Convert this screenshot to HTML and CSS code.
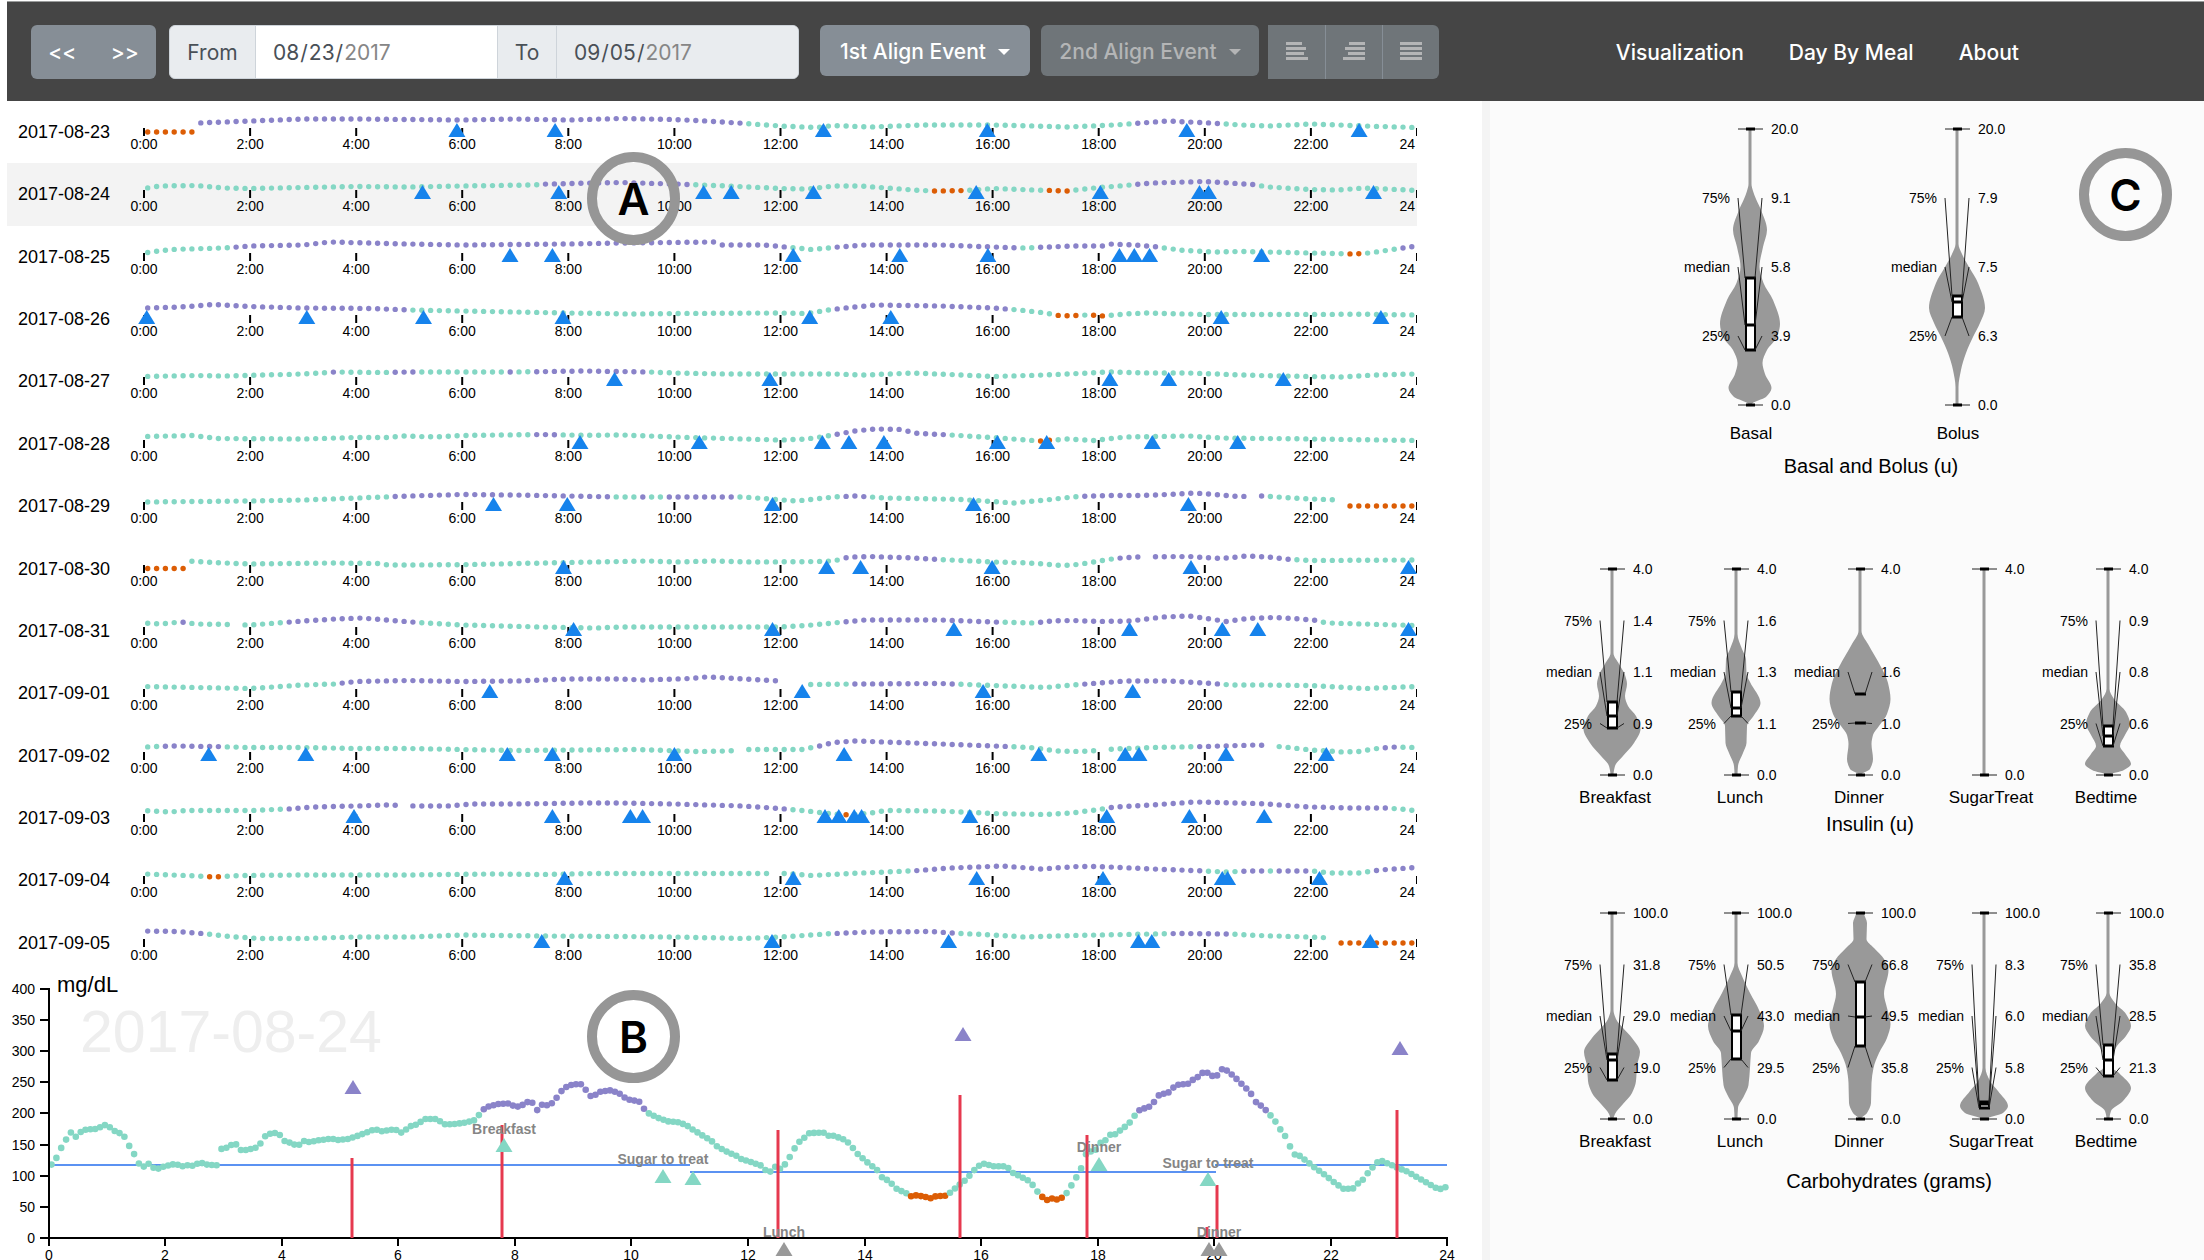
FILE: index.html
```html
<!DOCTYPE html>
<html lang="en">
<head>
<meta charset="utf-8">
<title>Glucose timeline</title>
<meta name="viewport" content="width=device-width, initial-scale=1">
<link rel="stylesheet" href="styles.css">
</head>
<body>
<header class="topbar">
  <div class="pager">
    <button type="button" class="pager-button" aria-label="Earlier">&lt;&lt;</button>
    <button type="button" class="pager-button" aria-label="Later">&gt;&gt;</button>
  </div>
  <div class="range">
    <label class="range-label range-from" for="from">From</label>
    <input class="range-input" id="from" type="date" value="2017-08-23">
    <label class="range-label range-to" for="to">To</label>
    <input class="range-input range-readonly" id="to" type="date" value="2017-09-05" readonly>
  </div>
  <button type="button" class="align-menu">1st Align Event <span class="caret"></span></button>
  <button type="button" class="align-menu align-second" disabled>2nd Align Event <span class="caret"></span></button>
  <div class="align-group">
    <button type="button" class="align-button" aria-label="Align left" disabled><svg viewBox="0 0 22 18" width="22" height="18"><path d="M0 1.5h16M0 6.5h20M0 11.500h18M0 16.500h22" stroke="currentColor" stroke-width="3"/></svg></button>
    <button type="button" class="align-button" aria-label="Align right" disabled><svg viewBox="0 0 22 18" width="22" height="18"><path d="M6 1.500h16M2 6.500h20M5 11.500h17M0 16.500h22" stroke="currentColor" stroke-width="3"/></svg></button>
    <button type="button" class="align-button" aria-label="Justify" disabled><svg viewBox="0 0 22 18" width="22" height="18"><path d="M0 1.500h22M0 6.500h22M0 11.500h22M0 16.500h22" stroke="currentColor" stroke-width="3"/></svg></button>
  </div>
  <nav class="nav">
    <a href="#visualization">Visualization</a>
    <a href="#meal">Day By Meal</a>
    <a href="#about">About</a>
  </nav>
</header>
<main class="content">
  <section class="left">
    <div class="days" id="days"></div>
    <svg class="detail" id="detail" viewBox="0 0 1475 286" role="img" aria-label="Glucose on 2017-08-24"></svg>
    <span class="badge badge-a">A</span>
    <span class="badge badge-b">B</span>
  </section>
  <section class="right">
    <svg class="violins" id="basal" viewBox="0 0 714 398"></svg>
    <svg class="violins" id="insulin" viewBox="0 0 714 360"></svg>
    <svg class="violins" id="carbs" viewBox="0 0 714 400"></svg>
    <span class="badge badge-c">C</span>
  </section>
</main>
<script src="charts.js"></script>
</body>
</html>
```
FILE: styles.css
```css
* { box-sizing: border-box; }

body {
  margin: 0;
  background: #fff;
  color: #000;
  font-family: "Liberation Sans", Arial, sans-serif;
}

.topbar {
  display: flex;
  align-items: flex-start;
  height: 100px;
  margin: 1px 0 0 7px;
  padding: 23px 0 0 24px;
  border-top: 1px solid #9a9c9c;
  background: #454545;
  font-family: Inter, "Liberation Sans", sans-serif;
  font-size: 21px;
}

button, input {
  font: inherit;
  border: 0;
  margin: 0;
}

.pager {
  display: flex;
  width: 125px;
  height: 54px;
  border-radius: 6px;
  background: #868e96;
  overflow: hidden;
}

.pager-button {
  flex: 1;
  padding: 0;
  background: none;
  color: #fff;
  font-weight: 500;
}

.range {
  display: flex;
  width: 630px;
  height: 54px;
  margin-left: 13px;
  border: 1px solid #ced4da;
  border-radius: 6px;
  background: #e9ecef;
  overflow: hidden;
  color: #495057;
}

.range-label {
  display: flex;
  align-items: center;
  justify-content: center;
  border-right: 1px solid #ced4da;
}

.range-from { width: 86px; }
.range-to { width: 60px; border-left: 1px solid #ced4da; }

.range-input {
  flex: 1;
  min-width: 0;
  padding: 0 16px;
  background: #fff;
  color: #495057;
}

.range-readonly { background: #e9ecef; }
.range-input::-webkit-datetime-edit-year-field { color: #868686; }
.range-input::-webkit-calendar-picker-indicator { display: none; }

.align-menu {
  display: flex;
  align-items: center;
  justify-content: center;
  gap: 12px;
  width: 210px;
  height: 51px;
  margin-left: 21px;
  padding: 2px 0 0;
  border-radius: 6px;
  background: #868e96;
  color: #fff;
  font-weight: 500;
}

.align-second {
  width: 218px;
  margin-left: 11px;
  background: #6f7579;
  color: #b4b5b6;
}

.caret {
  border: 6px solid transparent;
  border-top-color: currentColor;
  border-bottom: 0;
}

.align-group {
  display: flex;
  height: 54px;
  margin-left: 9px;
  border-radius: 0 6px 6px 0;
  overflow: hidden;
}

.align-button {
  width: 57px;
  padding: 0;
  background: #6f7579;
  color: #b4b5b6;
}

.align-button + .align-button { border-left: 1px solid #868e96; }

.nav {
  display: flex;
  gap: 45px;
  margin-left: auto;
  padding: 15px 185px 0 0;
  font-weight: 500;
}

.nav a { color: #fff; text-decoration: none; }

.content {
  display: grid;
  grid-template-columns: minmax(0, 1475fr) minmax(0, 722fr);
  padding-left: 7px;
}

.left { position: relative; }

.days {
  display: grid;
  grid-auto-rows: 1fr;
  min-height: 873px;
  padding-right: 65px;
}

.day {
  display: flex;
  align-items: flex-start;
}

.day-active { background: #f3f3f3; }

.day-date {
  flex: none;
  width: 120px;
  padding: 21px 0 0 11px;
  font-size: 18px;
  line-height: 21px;
}

.day-chart {
  flex: 1;
  min-width: 0;
  display: block;
}

.detail, .violins { display: block; width: 100%; }

.right {
  position: relative;
  border-left: 8px solid #f4f4f4;
  background: #fbfbfb;
}

.badge {
  position: absolute;
  display: grid;
  place-items: center;
  width: 93px;
  height: 93px;
  border: 10px solid #969696;
  border-radius: 50%;
  font-family: Inter, "Liberation Sans", sans-serif;
  font-size: 44px;
  font-weight: 600;
  line-height: 1;
}

.badge-a { left: 580px; top: 51px; }
.badge-b { left: 580px; top: 889px; }
.badge-c { right: 32px; top: 47px; }

.dot { fill: #84d7c4; }
.dot-high { fill: #8a83c9; }
.dot-low { fill: #dc5d05; }
.event { fill: #1683ec; }
.event-none { fill: #999; }
.axis { stroke: #000; stroke-width: 2; fill: none; }
.small { font-size: 14px; }
.meal { font-size: 14px; font-weight: 700; fill: #858585; text-anchor: middle; }
.middle { text-anchor: middle; }
.end { text-anchor: end; }
.unit { font-size: 22px; }
.watermark { font-size: 59px; fill: #eee; }
.basal-line { stroke: #5b92f2; stroke-width: 2; }
.bolus-line { stroke: #e6394f; stroke-width: 3; }
.name { font-size: 17px; text-anchor: middle; }
.title { font-size: 20px; text-anchor: middle; }
.shape { fill: #999; }
.leader { stroke: #222; stroke-width: 1; }
.box { fill: #fff; stroke: #000; stroke-width: 2; }
.mark { stroke: #000; stroke-width: 3; }
```
FILE: charts.js
```js
// Linear interpolation through [x, y] pairs.
function interpolate(points, x) {
  if (x <= points[0][0]) return points[0][1];
  for (let i = 1; i < points.length; i++) {
    if (x <= points[i][0]) {
      const [x0, y0] = points[i - 1];
      const [x1, y1] = points[i];
      return y0 + (y1 - y0) * (x - x0) / (x1 - x0);
    }
  }
  return points[points.length - 1][1];
}

function pairs(text) {
  return text.trim().split(/\s+/).map(p => p.split(',').map(Number));
}

const within = (ranges, x) => ranges.some(([a, b]) => x >= a && x <= b);
const triangle = (x, base, cls) =>
  `<path class="${cls}" d="M${(x - 8.5).toFixed(1)} ${base}h17l-8.5 -14z"/>`;

// curve: hour,height   high / low / gaps: hour ranges   events: hours
const days = [
  { date: '2017-08-23',
    curve: '0,-4 1,-4 1.01,5 2,7 3,9 4,9 5,8.5 6,8 7,9 8,8 9,9.5 10,8.5 10.6,7 11.2,5 12,2 12.7,.5 13,2.5 13.7,1 14.7,3 16,3 16.8,2 17.4,1 18.3,3 18.8,5 19.3,7 20.1,5 20.7,3 21.2,2 22,4 23,2 24,.5',
    high: [[1, 11.25], [18.7, 20.25]], low: [[0, 1]], gaps: [], events: [5.9, 7.75, 12.81, 15.9, 19.66, 22.91] },
  { date: '2017-08-24',
    curve: '0,1.5 .3,4 1,4.5 1.5,2 2,1.5 3,2.5 4,3.5 5,3 6,4 7.3,5 7.6,6 9,7.5 10,6 10.5,5 11,4 12,1.5 12.5,1 13,4 13.5,4 14,2 14.5,0 14.9,-1 15.5,-.5 16,1.5 16.8,0 17.4,-1 18,2.5 18.5,4.5 19,7 20,8.5 20.9,5.5 21.2,3 22,.5 22.5,0 23,2 24,-.5',
    high: [[7.5, 10.3], [18.6, 21]], low: [[14.8, 15.45], [16.95, 17.45]], gaps: [], events: [5.25, 7.82, 10.55, 11.07, 12.62, 15.69, 18.03, 19.9, 20.07, 23.18] },
  { date: '2017-08-25',
    curve: '0,0 .5,3.5 1.5,5 2,7 3,8 3.5,11 4.2,10 5,9 6,8 8,9 9,10 10.75,11 10.85,8 11.7,8 12.1,6 12.6,3.5 12.9,5 13.1,6 13.6,8 15,8 16,6 16.6,5 17.5,7 18.1,7 18.2,9 18.7,8 19.1,6 19.6,2.5 20.2,1 20.7,1.5 22,0 22.8,-1 23.1,0 23.6,4 24,7',
    high: [[1.6, 12.15], [13, 16.45], [16.8, 19.18], [23.7, 24]], low: [[22.65, 23]], gaps: [], events: [6.9, 7.7, 12.24, 14.25, 15.91, 18.39, 18.67, 18.96, 21.07] },
  { date: '2017-08-26',
    curve: '0,7 .7,8 1.3,10.5 2,8.5 3,7 4.3,6.5 5,5 6,4 7,3 8,2 9.2,1 10,1.5 12,2 12.5,1.5 12.9,5 13.3,7.5 13.8,10 15,9 16,7 16.5,5 17,2 17.3,-1 17.8,0 18.1,-1 18.5,1 18.9,2 20,.5 21,.5 23,.7 24,0',
    high: [[0, 4.98], [12.95, 16.25]], low: [[17.2, 17.7], [17.85, 18.2]], gaps: [], events: [.05, 3.07, 5.27, 7.9, 12.55, 14.08, 20.31, 23.32] },
  { date: '2017-08-27',
    curve: '0,.5 1,1.5 1.5,1 3,3 3.6,5 4.5,4.5 5,5 6,5 7,5 8.3,6 9.5,5 10,4 11,3 13,3 13.6,2 14.5,4 15.2,2.5 16,.5 17,2 18.2,5 19,4 19.7,4 21,1.5 22,.5 22.6,0 23.2,2 24,3',
    high: [[3.45, 3.65], [4.65, 5.15], [6.8, 6.95], [7.3, 9.5]], low: [], gaps: [], events: [8.87, 11.8, 18.21, 19.32, 21.48] },
  { date: '2017-08-28',
    curve: '0,3.5 .9,4.5 1.4,1.5 3,1 4,2.5 4.6,2.5 4.9,4 5.5,3 6,4.5 7.5,5.5 8.3,4.7 9,5 10,3 11,1.5 12,0 12.5,1 13,5 13.4,9 13.8,11 14.3,10.5 14.5,7 15.2,5 16,2.5 16.9,-1 17.4,1 17.9,-.5 18.5,3 19.7,4 20.3,2 22,1 24,-.5',
    high: [[7.3, 7.8], [13, 15.15]], low: [[16.85, 17.2]], gaps: [], events: [8.22, 10.47, 12.79, 13.29, 13.95, 16.09, 17.02, 19.01, 20.62] },
  { date: '2017-08-29',
    curve: '0,0 2,1 3,2 4,4 5,6 6,7.5 7,7 8,6 9,5 11.3,5 11.9,2.5 12.3,1 13,5 13.4,6 14,4 15.4,2.5 16,.5 16.4,-1 17,2 17.6,5.5 18.2,6.5 18.8,6.5 19.3,7.5 19.8,9 20.2,7.5 20.6,5.5 21.1,6 21.5,4.5 22,3 22.54,2 22.55,-4 24,-4',
    high: [[4.65, 8.9], [9.25, 9.45], [9.75, 11.2], [13.1, 13.65], [17.6, 21.2]], low: [[22.55, 24]], gaps: [[20.8, 20.97], [22.5, 22.62]], events: [6.59, 7.98, 11.85, 15.64, 19.69] },
  { date: '2017-08-30',
    curve: '0,-3.5 .82,-3.5 .83,4 1.5,2 2,1 3.5,2 4.4,1.5 4.6,0 5,0 6,.3 8,2.5 9.5,4 10,3 10.7,4 11.5,3 12.5,3.3 13,4 13.3,8 13.7,8.5 14.5,7 15,5.5 16,3 16.7,2 17.3,-.5 17.6,.5 17.9,3 18.3,6.5 18.7,8 19.7,8.5 20.3,6.5 20.8,9 21.2,8 21.6,5.5 22,4.5 24,5',
    high: [[13.1, 15.05], [18.25, 21.65]], low: [[0, .82]], gaps: [[18.75, 19]], events: [7.91, 12.87, 13.51, 15.99, 19.74, 23.84] },
  { date: '2017-08-31',
    curve: '0,4 .3,3 .7,5 1,3 1.6,2.5 2,2 2.5,4 3,6 3.6,8 4.1,9 4.8,6 5.3,4 6,2 7.5,0 8.5,-1 9,0 12,0 12.5,1.5 13,4 13.6,7 15,7 16,5 16.8,4 17.1,6 17.5,6.5 18,5.5 18.6,6 19.2,10 19.7,11 20.1,8 20.4,5.5 20.8,8.5 21.3,9.5 21.8,8 22.1,6.5 22.3,4 23,3 24,1.5',
    high: [[.65, .8], [2.7, 5.1], [13.2, 16.1], [16.9, 22.15]], low: [], gaps: [[1.65, 1.9]], events: [8.1, 11.85, 15.27, 18.58, 20.33, 21, 23.84] },
  { date: '2017-09-01',
    curve: '0,2.5 2,.5 3,4 3.6,5 4,7.5 5,8.5 6,7.5 7,8 8,10 9,10 9.4,9 10.3,10.5 10.6,12 11,11 11.5,9.5 12,8 12.5,4.5 13.5,5 15,5.5 16,3.5 17,1.5 17.5,4 18,6 18.5,8 19.3,8 20,6 20.5,4 21,4 22,3.5 23,.5 24,2.5',
    high: [[3.7, 12], [13.3, 15.3], [17.65, 20.3]], low: [], gaps: [[12, 12.5]], events: [6.52, 12.41, 15.82, 18.64] },
  { date: '2017-09-02',
    curve: '0,5 .5,6 1.3,5.5 2,4.5 3,4.5 4,3.5 5,3.5 6,2.5 7,1.5 9.3,2.5 10.4,.5 11,1 11.4,2.5 12.4,2.5 12.7,5.5 13,9.5 13.4,11 14.5,9 15.5,7 16.3,5.5 16.8,4 17.2,1 17.7,.5 18.3,3 19,4.5 20,5.5 21,7 21.5,5 22,2 22.6,0 22.9,.5 23.3,4 23.6,5 24,4.500',
    high: [[.3, 1.45], [12.7, 16.3], [19.8, 21.4], [23.4, 23.7]], low: [], gaps: [[11.2, 11.3], [18.07, 18.15], [21.15, 21.25]], events: [1.22, 3.05, 6.85, 7.7, 10, 13.2, 16.87, 18.5, 18.76, 20.4, 22.29] },
  { date: '2017-09-03',
    curve: '0,3.5 .5,2 .8,3.5 2,3.5 2.7,5 3.2,7 4,8 4.6,9 5.1,8 5.7,8 6.2,10 7,10 8.3,11 9,11 10,10 11.3,8 12,5.5 12.5,3 12.9,.5 13.3,-1 13.7,1 14,3.5 15,3 16,.5 17,-.5 17.5,1 18,4.5 18.3,7 19,9 19.8,12 21,10.5 22,7 22.7,6 23.4,6 23.8,4.5 24,3',
    high: [[2.7, 12.1], [18.1, 23.55]], low: [[13.2, 13.4]], gaps: [[4.88, 5]], events: [3.96, 7.7, 9.17, 9.4, 12.84, 13.1, 13.39, 13.53, 15.57, 18.15, 19.71, 21.12] },
  { date: '2017-09-04',
    curve: '0,2 .8,.5 1.3,-1 1.8,.5 3,1 5,1 6.5,2 7.5,1.5 8.5,2.5 11.7,2.5 12.1,2.5 12.6,.5 13.3,2.5 14,4 14.6,5.5 15.2,8 16.2,10 16.9,7 17.6,9.5 18,9.5 19,7 20,5 20.4,4 20.8,5 22,5 22.4,3 22.9,3 23.3,6 24,8.5',
    high: [[14.5, 20], [20.7, 21.15], [21.3, 21.95], [23.2, 24]], low: [[1.2, 1.45]], gaps: [[11.85, 11.95]], events: [7.93, 12.24, 15.7, 18.08, 20.33, 20.43, 22.16] },
  { date: '2017-09-05',
    curve: '0,8 .6,7.5 1.1,5.5 1.6,2.5 2.2,.5 3,.5 4,2 5,2 6,4 7.5,3 9,2.5 10,2 11.3,.5 12,2 13,5.5 13.7,7 14.8,7.5 15.4,5.5 16,4 16.6,2 17.5,3.5 18.5,4.5 19.5,5.5 20.5,5 21,3.5 22,2 22.42,1 22.43,-4 24,-4',
    high: [[0, 1.15], [12.95, 15.35], [19.25, 20.5]], low: [[22.43, 24]], gaps: [[22.35, 22.45]], events: [7.5, 11.84, 15.17, 18.75, 19, 23.12] }
];

const hourX = h => 17 + h * 53.04;
const tickTop = 27;

document.getElementById('days').innerHTML = days.map(day => {
  const curve = pairs(day.curve);
  let svg = '';
  for (let h = 0; h <= 24; h += 2) {
    svg += `<path class="axis" stroke-width="1" d="M${hourX(h).toFixed(1)} ${tickTop}v8"/>`;
    svg += h < 24
      ? `<text class="small middle" x="${hourX(h).toFixed(1)}" y="48">${h}:00</text>`
      : '<text class="small end" x="1288" y="48">24</text>';
  }
  for (let k = 0; k < 144; k++) {
    const h = (k + .42) / 6;
    if (within(day.gaps, h)) continue;
    const cls = within(day.low, h) ? 'dot-low' : within(day.high, h) ? 'dot-high' : 'dot';
    svg += `<circle class="${cls}" cx="${hourX(h).toFixed(1)}" cy="${(tickTop - interpolate(curve, h)).toFixed(1)}" r="2.7"/>`;
  }
  svg += day.events.map(h => triangle(hourX(h), tickTop + 9, 'event')).join('');
  const active = day.date === '2017-08-24' ? ' day-active' : '';
  return `<div class="day${active}"><span class="day-date">${day.date}</span>` +
    `<svg class="day-chart" viewBox="0 0 1290 62">${svg}</svg></div>`;
}).join('');

// Sensor trace of the selected day, morning and afternoon parts, in plot units.
const morning = pairs(`109,617 119,598 130,566 140,542 151,519 160,534 171,519 181,512 202,510 212,505 222,498 232,504
 243,516 253,522 264,534 274,561 284,585 294,613 305,623 315,614 325,626 336,629 346,623 367,616 377,617 387,622 397,619
 408,620 418,614 429,612 439,617 460,619 468,570 480,566 490,558 501,556 510,573 521,573 541,567 552,553 562,532 572,524
 583,522 593,528 603,546 614,551 624,557 634,557 644,546 655,549 675,544 696,540 706,540 716,543 737,540 757,531 778,520
 788,514 798,512 809,517 829,512 840,513 850,521 860,512 871,501 881,497 891,489 901,480 922,480 932,486 942,496 965,495
 985,491 1005,484 1015,468 1025,451 1036,442 1056,435 1076,433 1087,440 1097,443 1107,438 1118,429 1128,431 1138,454
 1148,437 1158,439 1169,433 1179,417 1190,396 1200,384 1210,378 1230,374 1241,392 1251,411 1261,408 1272,398 1292,394
 1303,398 1313,404 1323,415 1333,422 1354,427 1365,450 1375,463 1395,477 1415,487 1440,490 1457,501 1467,511 1487,528
 1508,546 1520,563 1540,578 1560,590`).map(([x, y]) => [(x - 103) / 123.5, (837 - y) / 1.87]);
const afternoon = pairs(`12,589 23,600 43,609 63,619 73,633 83,638 94,622 104,630 114,615 124,592 134,566 144,547 154,535
 164,522 194,521 204,531 214,530 234,541 244,551 254,568 264,586 284,611 304,634 314,656 324,663 334,675 344,690 364,703
 374,712 384,709 404,714 414,718 424,712 444,710 454,701 464,688 484,665 494,650 504,633 514,620 524,614 544,622 564,622
 574,627 584,642 604,656 614,664 625,679 635,700 645,715 655,724 665,718 675,722 685,716 695,701 705,677 715,653 725,626
 735,582 755,572 765,550 775,543 785,526 795,526 805,514 815,503 825,490 835,469 845,453 865,443 875,428 885,408 905,400
 915,385 925,377 945,374 955,362 965,354 975,341 985,341 995,351 1005,349 1015,330 1025,335 1035,347 1045,360 1065,389
 1075,405 1085,430 1095,440 1106,455 1116,471 1126,490 1136,514 1146,533 1156,566 1166,589 1176,591 1186,603 1206,626
 1226,647 1246,670 1266,690 1286,688 1296,672 1306,661 1316,641 1326,624 1336,609 1346,606 1356,613 1376,626 1396,637
 1416,654 1436,670 1456,687 1466,690 1477,684`).map(([x, y]) => [11.692 + x / 120.2, (837 - y) / 1.87]);
const trace = morning.concat(afternoon);

const plotX = h => 41.6 + h * 58.28;
const plotY = mg => 264 - mg * .6233;
let detail = '<text class="watermark" x="73" y="78">2017-08-24</text><text class="unit" x="50" y="18">mg/dL</text>';
detail += '<path class="basal-line" d="M42 191H683"/><path class="basal-line" d="M683 198H1209"/><path class="basal-line" d="M1208 191H1440"/>';
for (let i = 0; i < 288; i++) {
  const h = i / 12 + .05;
  const mg = interpolate(trace, h);
  const cls = mg > 202 ? 'dot-high' : mg < 70 ? 'dot-low' : 'dot';
  detail += `<circle class="${cls}" cx="${plotX(h).toFixed(1)}" cy="${plotY(mg).toFixed(1)}" r="3.3"/>`;
}
detail += '<path class="axis" d="M33 15H42V264H1440v8"/>';
for (let mg = 0; mg <= 400; mg += 50) {
  detail += `<path class="axis" d="M33 ${Math.round(plotY(mg))}h9"/>` +
    `<text class="small end" x="28" y="${Math.round(plotY(mg)) + 5}">${mg}</text>`;
}
for (let h = 0; h <= 24; h += 2) {
  detail += `<path class="axis" d="M${Math.round(plotX(h))} 264v8"/>` +
    `<text class="small middle" x="${Math.round(plotX(h))}" y="286">${h}</text>`;
}
detail += [[345, 184], [495, 151], [771, 156], [953, 121], [1080, 161], [1200, 253], [1210, 211], [1390, 136]]
  .map(([x, y]) => `<path class="bolus-line" d="M${x} ${y}V264"/>`).join('');
detail += [['Breakfast', 497, 160], ['Sugar to treat', 656, 190], ['Lunch', 777, 263], ['Dinner', 1092, 178],
  ['Sugar to treat', 1201, 194], ['Dinner', 1212, 263]]
  .map(([t, x, y]) => `<text class="meal" x="${x}" y="${y}">${t}</text>`).join('');
detail += [[346, 120], [956, 67], [1393, 81]].map(([x, y]) => triangle(x, y, 'dot-high')).join('');
detail += [[497, 178], [656, 209], [686, 211], [1092, 197], [1201, 212]].map(([x, y]) => triangle(x, y, 'dot')).join('');
detail += [[777, 282], [1202, 282], [1212, 282]].map(([x, y]) => triangle(x, y, 'event-none')).join('');
document.getElementById('detail').innerHTML = detail;

// Smooth mirrored outline through [depth, half width] pairs.
function violinPath(cx, top, profile) {
  const side = (list, sign) => {
    const p = list.map(([y, w]) => [cx + sign * w, top + y]);
    let d = '';
    for (let i = 0; i < p.length - 1; i++) {
      const third = (p[i + 1][1] - p[i][1]) / 3;
      const slope = j => {
        const a = p[j - 1], b = p[j], c = p[j + 1];
        if (!a || !c) return 0;
        const s1 = (b[0] - a[0]) / (b[1] - a[1]), s2 = (c[0] - b[0]) / (c[1] - b[1]);
        return s1 * s2 <= 0 ? 0 : 2 * s1 * s2 / (s1 + s2);
      };
      d += `C${(p[i][0] + slope(i) * third).toFixed(1)} ${(p[i][1] + third).toFixed(1)} ` +
        `${(p[i + 1][0] - slope(i + 1) * third).toFixed(1)} ${(p[i + 1][1] - third).toFixed(1)} ` +
        `${p[i + 1][0].toFixed(1)} ${p[i + 1][1].toFixed(1)}`;
    }
    return d;
  };
  const back = profile.slice().reverse();
  return `M${cx + profile[0][1]} ${top}${side(profile, 1)}L${cx - back[0][1]} ${top + back[0][0]}${side(back, -1)}Z`;
}

function violin(v, top, height) {
  const q = height / 4;
  let s = `<path class="shape" d="${violinPath(v.x, top, pairs(v.shape))}"/>`;
  const marks = v.marks || [];
  if (marks[0] != null) {
    s += `<rect class="box" x="${v.x - 4}" y="${top + marks[0]}" width="9" height="${marks[2] - marks[0]}"/>`;
  }
  const names = ['75%', 'median', '25%'];
  marks.forEach((m, i) => {
    if (m == null) return;
    const y = top + q * (i + 1);
    s += `<path class="mark" d="M${v.x - 5} ${top + m}h11"/>` +
      `<path class="leader" d="M${v.x - 12} ${y}L${v.x - 5} ${top + m}M${v.x + 12} ${y}L${v.x + 5} ${top + m}"/>` +
      `<text class="small end" x="${v.x - 20}" y="${y + 5}">${names[i]}</text>` +
      `<text class="small" x="${v.x + 21}" y="${y + 5}">${v.values[i]}</text>`;
  });
  [[top, v.max], [top + height, '0.0']].forEach(([y, t]) => {
    s += `<path class="leader" d="M${v.x - 12} ${y}h25"/><path class="mark" d="M${v.x - 4} ${y}h9"/>` +
      `<text class="small" x="${v.x + 21}" y="${y + 5}">${t}</text>`;
  });
  return s + `<text class="name" x="${v.label}" y="${top + height + v.drop}">${v.name}</text>`;
}

function panel(id, list, top, height, title, x, y) {
  document.getElementById(id).innerHTML = list.map(v => violin(v, top, height)).join('') +
    `<text class="title" x="${x}" y="${y}">${title}</text>`;
}

panel('basal', [
  { name: 'Basal', x: 260, label: 261, drop: 34, max: '20.0', values: ['9.1', '5.8', '3.9'], marks: [149, 196, 221],
    shape: '0,1.5 55,1.5 62,3 70,6 81,11 101,17 118,13 138,9.5 154,13.5 171,23 195,30 208,27 221,17 234,12.5 245,15 259,21.5 268,16 275,2' },
  { name: 'Bolus', x: 467, label: 468, drop: 34, max: '20.0', values: ['7.9', '7.5', '6.3'], marks: [167, 173, 188],
    shape: '0,1.5 115,1.5 125,5 138,12 154,21 179,28 194,23 208,16 224,9 241,4 258,1.5 276,1.5' }
], 28, 276, 'Basal and Bolus (u)', 381, 372);

panel('insulin', [
  { name: 'Breakfast', x: 122, label: 125, drop: 28, max: '4.0', values: ['1.4', '1.1', '0.9'], marks: [133, 147, 159],
    shape: '0,1.5 84,1.5 95,7 106,13 115,15 127,13 137,16 147,24 160,28.5 174,22 187,11 197,3 206,1.5' },
  { name: 'Lunch', x: 246, label: 250, drop: 28, max: '4.0', values: ['1.6', '1.3', '1.1'], marks: [123, 139, 147],
    shape: '0,1.5 65,1.5 80,6 90,10 105,10.5 113,14 134,24.5 147,17.5 157,11 174,10.5 184,7 197,2 206,1.5' },
  { name: 'Dinner', x: 370, label: 369, drop: 28, max: '4.0', values: ['', '1.6', '1.0'], marks: [null, 125, 154],
    shape: '0,1.5 62,1.5 75,8 98,21 114,28 130,30.5 145,27 157,19 166,13 175,11.5 190,13 200,10 206,1' },
  { name: 'SugarTreat', x: 494, label: 501, drop: 28, max: '4.0', shape: '0,1.5 206,1.5' },
  { name: 'Bedtime', x: 618, label: 616, drop: 28, max: '4.0', values: ['0.9', '0.8', '0.6'], marks: [157, 167, 177],
    shape: '0,1.5 120,1.5 130,6 143,18 155,22 166,17 177,12 185,17 195,23 201,16 206,2' }
], 70, 206, 'Insulin (u)', 380, 332);

panel('carbs', [
  { name: 'Breakfast', x: 122, label: 125, drop: 28, max: '100.0', values: ['31.8', '29.0', '19.0'], marks: [141, 147, 167],
    shape: '0,1.5 97,1.5 106,4 115,11 125,20 139,28 153,25 168,24 180,20 191,11 201,3 206,1.5' },
  { name: 'Lunch', x: 246, label: 250, drop: 28, max: '100.0', values: ['50.5', '43.0', '29.5'], marks: [102, 118, 146],
    shape: '0,1.5 50,1.5 63,6 80,14 97,23 113,28 128,23 140,15 155,14 172,12.5 183,8 195,2 206,1.5' },
  { name: 'Dinner', x: 370, label: 369, drop: 28, max: '100.0', values: ['66.8', '49.5', '35.8'], marks: [69, 104, 133],
    shape: '0,4 10,7 26,6.5 35,14 46,24 57,28.5 81,24 95,27 111,30.5 125,27 140,19 155,13.5 170,11.5 190,11 200,7 206,1' },
  { name: 'SugarTreat', x: 494, label: 501, drop: 28, max: '100.0', values: ['8.3', '6.0', '5.8'], marks: [189, 191, 195],
    shape: '0,1.5 155,1.5 168,6 178,14 193,24 200,19 206,3' },
  { name: 'Bedtime', x: 618, label: 616, drop: 28, max: '100.0', values: ['35.8', '28.5', '21.3'], marks: [132, 147, 163],
    shape: '0,1.5 80,1.5 90,7 101,18 113,23 123,18 133,9 142,5 155,5 160,11 175,23 188,15 198,3 206,1.5' }
], 54, 206, 'Carbohydrates (grams)', 399, 329);
```
